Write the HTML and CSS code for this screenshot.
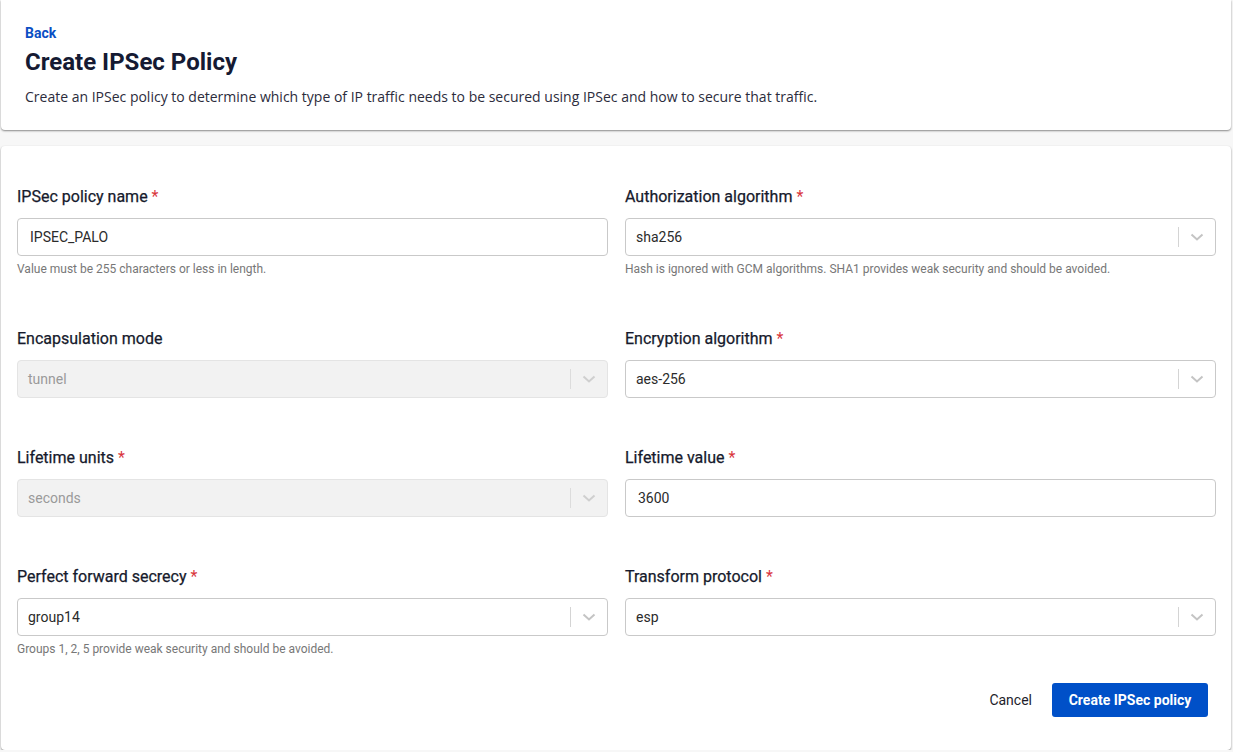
FILE: index.html
```html
<!DOCTYPE html>
<html>
<head>
<meta charset="utf-8">
<link rel="stylesheet" href="styles.css">
</head>
<body>
<div class="page">
  <header class="card head">
    <a class="back" href="#">Back</a>
    <h1 class="title">Create IPSec Policy</h1>
    <p class="desc">Create an IPSec policy to determine which type of IP traffic needs to be secured using IPSec and how to secure that traffic.</p>
  </header>
  <main class="card form">
    <div class="grid">
      <div class="field">
        <div class="label">IPSec policy name <span class="req">*</span></div>
        <div class="input"><span class="val">IPSEC_PALO</span></div>
        <div class="help">Value must be 255 characters or less in length.</div>
      </div>
      <div class="field">
        <div class="label">Authorization algorithm <span class="req">*</span></div>
        <div class="select"><span class="val">sha256</span><span class="sep"></span><svg class="chev" viewBox="0 0 20 20"><path d="M4.5 7.5 L10 12.5 L15.5 7.5" fill="none" stroke="currentColor" stroke-width="2"/></svg></div>
        <div class="help">Hash is ignored with GCM algorithms. SHA1 provides weak security and should be avoided.</div>
      </div>
      <div class="field">
        <div class="label">Encapsulation mode</div>
        <div class="select disabled"><span class="val">tunnel</span><span class="sep"></span><svg class="chev" viewBox="0 0 20 20"><path d="M4.5 7.5 L10 12.5 L15.5 7.5" fill="none" stroke="currentColor" stroke-width="2"/></svg></div>
      </div>
      <div class="field">
        <div class="label">Encryption algorithm <span class="req">*</span></div>
        <div class="select"><span class="val">aes-256</span><span class="sep"></span><svg class="chev" viewBox="0 0 20 20"><path d="M4.5 7.5 L10 12.5 L15.5 7.5" fill="none" stroke="currentColor" stroke-width="2"/></svg></div>
      </div>
      <div class="field">
        <div class="label">Lifetime units <span class="req">*</span></div>
        <div class="select disabled"><span class="val">seconds</span><span class="sep"></span><svg class="chev" viewBox="0 0 20 20"><path d="M4.5 7.5 L10 12.5 L15.5 7.5" fill="none" stroke="currentColor" stroke-width="2"/></svg></div>
      </div>
      <div class="field">
        <div class="label">Lifetime value <span class="req">*</span></div>
        <div class="input"><span class="val">3600</span></div>
      </div>
      <div class="field">
        <div class="label">Perfect forward secrecy <span class="req">*</span></div>
        <div class="select"><span class="val">group14</span><span class="sep"></span><svg class="chev" viewBox="0 0 20 20"><path d="M4.5 7.5 L10 12.5 L15.5 7.5" fill="none" stroke="currentColor" stroke-width="2"/></svg></div>
        <div class="help">Groups 1, 2, 5 provide weak security and should be avoided.</div>
      </div>
      <div class="field">
        <div class="label">Transform protocol <span class="req">*</span></div>
        <div class="select"><span class="val">esp</span><span class="sep"></span><svg class="chev" viewBox="0 0 20 20"><path d="M4.5 7.5 L10 12.5 L15.5 7.5" fill="none" stroke="currentColor" stroke-width="2"/></svg></div>
      </div>
    </div>
    <div class="actions">
      <button class="btn cancel">Cancel</button>
      <button class="btn primary">Create IPSec policy</button>
    </div>
  </main>
</div>
</body>
</html>
```

FILE: styles.css
```css
* { box-sizing: border-box; }
html, body { margin: 0; padding: 0; }
body {
  background: #f7f7f7;
  font-family: Roboto, "Liberation Sans", sans-serif;
  color: #1d1d2b;
}
.page {
  padding: 0 2px 0 1px;
  display: flex;
  flex-direction: column;
  gap: 16px;
}
.card {
  background: #fff;
  border-radius: 0 0 4px 4px;
  box-shadow: 0 1px 2px rgba(0,0,0,0.45);
}
.head {
  padding: 23px 24px 26px;
  height: 130px;
}
.back {
  display: block;
  color: #0b4fc4;
  font-weight: 700;
  font-size: 14px;
  line-height: 20px;
  text-decoration: none;
}
.title {
  margin: 4px 0 0;
  font-size: 24px;
  line-height: 30px;
  font-weight: 700;
  color: #151a33;
}
.desc {
  margin: 10px 0 0;
  font-family: "Open Sans", sans-serif;
  font-size: 14px;
  line-height: 20px;
  color: #2c2c3c;
}
.form {
  padding: 41px 15px 33px 16px;
  border-radius: 4px;
}
.grid {
  display: grid;
  grid-template-columns: 1fr 1fr;
  column-gap: 17px;
  row-gap: 50px;
}
.field { display: flex; flex-direction: column; }
.label {
  font-size: 16px;
  line-height: 20px;
  font-weight: 400;
  color: #161a2c;
  margin-bottom: 11px;
  -webkit-text-stroke: 0.25px #161a2c;
}
.req { color: #d9363e; -webkit-text-stroke: 0; }
.input, .select {
  height: 38px;
  border: 1px solid #c9c9c9;
  border-radius: 4px;
  background: #fff;
  display: flex;
  align-items: center;
  font-size: 14px;
  color: #2b2b2b;
}
.input { padding-left: 12px; }
.select { padding-left: 10px; padding-right: 8px; }
.select .val { flex: 1; }
.sep {
  width: 1px;
  height: 20px;
  background: #d4d4d4;
  margin-right: 8px;
}
.chev {
  width: 20px;
  height: 20px;
  color: #c4c4c4;
}
.disabled {
  background: #f2f2f2;
  border-color: #e4e4e4;
  color: #9a9a9a;
}
.disabled .sep { background: #dcdcdc; }
.disabled .chev { color: #cfcfcf; }
.help {
  margin-top: 4px;
  font-size: 12px;
  line-height: 19px;
  color: #777;
}
.actions {
  display: flex;
  justify-content: flex-end;
  gap: 4px;
  margin-top: 24px;
  padding-right: 8px;
}
.btn {
  font-family: Roboto, "Liberation Sans", sans-serif;
  font-size: 14px;
  height: 34px;
  border: none;
  border-radius: 3px;
  cursor: pointer;
}
.cancel {
  background: transparent;
  color: #1d1d2b;
  padding: 0 16px;
  font-weight: 400;
}
.primary {
  background: #0050c8;
  color: #fff;
  font-weight: 700;
  padding: 0 16px;
  width: 156px;
}
```
